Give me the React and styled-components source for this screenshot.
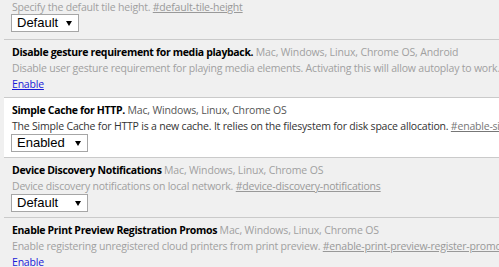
import React from "react";
import styled, { createGlobalStyle } from "styled-components";

const GlobalStyle = createGlobalStyle`
  html, body { margin: 0; padding: 0; }
  body {
    background: #f0f0f0;
    overflow: hidden;
    font-family: "Open Sans", "Segoe UI", sans-serif;
    font-size: 10.5px;
    letter-spacing: -0.2px;
  }
`;

const Page = styled.div`
  padding-left: 4px;
  margin-top: -1px;
`;

const Experiment = styled.div`
  padding: ${(p) => (p.$first ? "0 0 7px" : "4px 0 5px")} 8px;
  border-top: ${(p) => (p.$first ? "none" : "1px solid #cacaca")};
  background: ${(p) => (p.$highlight ? "#ffffff" : "transparent")};
  line-height: 16px;
  white-space: nowrap;
  overflow: hidden;
`;

const Title = styled.div`
  color: #000;
`;

const Name = styled.span`
  font-weight: 700;
  letter-spacing: -0.33px;
`;

const Platforms = styled.span`
  color: ${(p) => (p.$active ? "#555" : "#a0a0a0")};
  letter-spacing: -0.15px;
`;

const Desc = styled.div`
  color: ${(p) => (p.$active ? "#333" : "#a0a0a0")};
`;

const Permalink = styled.a`
  color: ${(p) => (p.$active ? "#777" : "#999")};
  text-decoration: underline;
`;

const ActionLink = styled.a`
  color: #1a1ad8;
  text-decoration: ${(p) => (p.$underline ? "underline" : "none")};
  display: inline-block;
`;

const Select = styled.div`
  display: flex;
  align-items: center;
  justify-content: space-between;
  box-sizing: border-box;
  width: ${(p) => p.$width}px;
  height: 18px;
  margin: ${(p) => (p.$first ? "-1px" : "0")} 0 0 -1px;
  padding: 0 6px 0 5px;
  background: #fff;
  border: 1px solid #a6a6a6;
  font-family: "Liberation Sans", Arial, sans-serif;
  font-size: 13px;
  letter-spacing: 0;
  color: #000;
`;

const Arrow = () => (
  <svg width="6" height="5" viewBox="0 0 6 5">
    <path d="M0 0 H6 L3 5 Z" fill="#000" />
  </svg>
);

export default function App() {
  return (
    <>
      <GlobalStyle />
      <Page>
        <Experiment $first>
          <Desc>
            Specify the default tile height.{" "}
            <Permalink>#default-tile-height</Permalink>
          </Desc>
          <Select $width={68} $first>
            <span>Default</span>
            <Arrow />
          </Select>
        </Experiment>

        <Experiment>
          <Title>
            <Name>Disable gesture requirement for media playback.</Name>{" "}
            <Platforms>Mac, Windows, Linux, Chrome OS, Android</Platforms>
          </Title>
          <Desc>
            Disable user gesture requirement for playing media elements. Activating this will allow autoplay to work.{" "}
            <Permalink>#disable-gesture-requirement-for-media-playback</Permalink>
          </Desc>
          <ActionLink $underline>Enable</ActionLink>
        </Experiment>

        <Experiment $highlight>
          <Title>
            <Name>Simple Cache for HTTP.</Name>{" "}
            <Platforms $active>Mac, Windows, Linux, Chrome OS</Platforms>
          </Title>
          <Desc $active>
            The Simple Cache for HTTP is a new cache. It relies on the filesystem for disk space allocation.{" "}
            <Permalink $active>#enable-simple-cache-backend</Permalink>
          </Desc>
          <Select $width={77}>
            <span>Enabled</span>
            <Arrow />
          </Select>
        </Experiment>

        <Experiment>
          <Title>
            <Name>Device Discovery Notifications</Name>{" "}
            <Platforms>Mac, Windows, Linux, Chrome OS</Platforms>
          </Title>
          <Desc>
            Device discovery notifications on local network.{" "}
            <Permalink>#device-discovery-notifications</Permalink>
          </Desc>
          <Select $width={77}>
            <span>Default</span>
            <Arrow />
          </Select>
        </Experiment>

        <Experiment>
          <Title>
            <Name>Enable Print Preview Registration Promos</Name>{" "}
            <Platforms>Mac, Windows, Linux, Chrome OS</Platforms>
          </Title>
          <Desc>
            Enable registering unregistered cloud printers from print preview.{" "}
            <Permalink>#enable-print-preview-register-promos</Permalink>
          </Desc>
          <ActionLink>Enable</ActionLink>
        </Experiment>
      </Page>
    </>
  );
}
